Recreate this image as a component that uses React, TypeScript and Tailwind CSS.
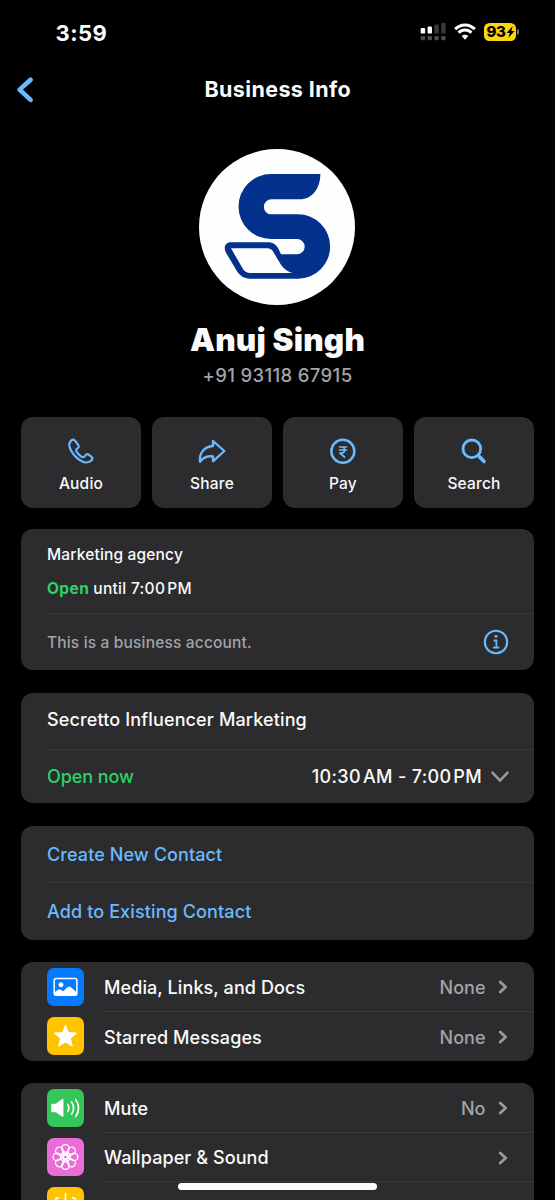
import type { ReactNode } from "react";

const CARD = "ml-[21px] w-[513px] rounded-xl bg-[#2c2c2e]";

function StatusBar() {
  return (
    <div className="flex h-[63px] items-center justify-between pl-[55.5px] pr-[36px]">
      <span className="pt-[2px] text-[22px] font-bold leading-none tracking-[0.5px]">3:59</span>
      <div className="flex items-center">
        <svg className="h-[19px] w-[27px]" viewBox="0 0 27 19">
          <g fill="#fff">
            <rect x="0.7" y="6" width="4.4" height="5.6" rx="1.2" />
            <rect x="7.6" y="4.4" width="4.4" height="7.2" rx="1.2" />
          </g>
          <g fill="#3a3a3a">
            <rect x="14.4" y="2.6" width="4.4" height="9" rx="1.2" />
            <rect x="21.2" y="0.7" width="4.4" height="10.9" rx="1.2" />
          </g>
          <g fill="#4b4b4b">
            <rect x="0.7" y="14" width="4.4" height="4.3" rx="1.2" />
            <rect x="7.6" y="14" width="4.4" height="4.3" rx="1.2" />
            <rect x="14.4" y="14" width="4.4" height="4.3" rx="1.2" />
            <rect x="21.2" y="14" width="4.4" height="4.3" rx="1.2" />
          </g>
        </svg>
        <svg className="ml-[7px] h-[17px] w-[22px]" viewBox="0 0 66 51">
          <g fill="none" stroke="#fff" strokeWidth="9">
            <path d="M3.500 18.500 C20 1.500 46 1.500 62.500 18.500" />
            <path d="M14 29.500 C24 18.500 42 18.500 52 29.500" />
          </g>
          <path d="M23 39 C28 33.500 38 33.500 43 39 L33 50Z" fill="#fff" />
        </svg>
        <div className="ml-[8px] flex h-[18px] w-[32px] items-center rounded-[5.500px] bg-[#fdd50b] pl-[2.500px]">
          <span className="text-[15px] font-extrabold leading-none tracking-[-0.5px] text-black">93</span>
          <svg className="ml-px h-[12px] w-[9px]" viewBox="0 0 9 12">
            <path d="M6.800 0 L0.600 6.900 H3.800 L2.300 12 L8.600 5 H5.300Z" fill="#000" />
          </svg>
        </div>
        <div className="ml-[1px] h-[6px] w-[2px] rounded-r-full bg-[#6b7580]" />
      </div>
    </div>
  );
}

function Avatar() {
  return (
    <svg className="ml-[199px] h-[156px] w-[156px] rounded-full bg-[#fefefe]" viewBox="28 27 468 468">
      <path
        fill="#03318c"
        d="M392 102 H244 A97.500 97.500 0 0 0 244 297 H322 A23 23 0 0 1 322 343 H274 L267 328 C260 314 250 307 235 307 H124 C107 307 100 322 109 338 L142 394 C151 408 164 416 180 416 H325 A96.500 96.500 0 0 0 325 223 H245 A22.500 22.500 0 0 1 245 178 H330 C368 178 392 145 392 102Z"
      />
      <path
        fill="#fefefe"
        d="M124 325 H232 C241 325 247 329 251 336 L269 366 C278 382 290 394 308 399 H182 C172 399 165 395 160 387Z"
      />
    </svg>
  );
}

function Action({ label, children }: { label: string; children: ReactNode }) {
  return (
    <div className="flex h-[91px] w-[120px] flex-col items-center rounded-xl bg-[#2c2c2e] pt-[19px]">
      <svg className="h-[30px] w-[30px]" viewBox="0 0 90 90" fill="none" stroke="#6abaff" strokeLinejoin="round" strokeLinecap="round">
        {children}
      </svg>
      <span className="mt-[8px] text-[15.5px] font-medium leading-[20px] tracking-[0.2px]">{label}</span>
    </div>
  );
}

function Chevron() {
  return (
    <svg className="h-[14px] w-[10px]" viewBox="0 0 10 14" fill="none" stroke="#9a9a9f" strokeWidth="2.700" strokeLinecap="round" strokeLinejoin="round">
      <path d="M2.200 1.900 L7.700 7 L2.200 12.100" />
    </svg>
  );
}

interface RowProps {
  icon: ReactNode;
  tile: string;
  label: string;
  value?: string;
  first?: boolean;
  last?: boolean;
}

function Row({ icon, tile, label, value, first, last }: RowProps) {
  return (
    <div className={`flex pl-[26px] ${first ? "h-[50px]" : "h-[49px]"}`}>
      <div className={`h-[38px] w-[37px] shrink-0 overflow-hidden rounded-[7px] ${first ? "mt-[6px]" : "mt-[5px]"} ${tile}`}>
        <svg className="h-[38px] w-[37px]" viewBox="0 0 37.500 37.500">{icon}</svg>
      </div>
      <div className={`ml-[20px] flex grow items-center pr-[26px] pt-[1px] ${last ? "" : "border-b border-[#3a3a3c]"}`}>
        <span className="grow text-[18px] font-medium tracking-[0.09px]">{label}</span>
        <span className="mr-[12.5px] text-[18px] font-medium text-[#a3a3a8]">{value}</span>
        <Chevron />
      </div>
    </div>
  );
}

const petals = [0, 45, 90, 135, 180, 225, 270, 315];

export default function App() {
  return (
    <div className="relative h-[1200px] w-[555px] overflow-hidden bg-black font-['Inter',sans-serif] text-[#fafafa]">
      <StatusBar />
      <header className="flex h-[53px] items-center">
        <svg className="ml-[15px] h-[28px] w-[20px]" viewBox="0 0 20 28" fill="none" stroke="#6abaff" strokeWidth="4.600" strokeLinecap="round" strokeLinejoin="round">
          <path d="M15.600 3.700 L4.600 13.600 L15.600 23.900" />
        </svg>
        <h1 className="ml-[169.5px] text-[21.5px] font-bold leading-none tracking-[0.38px]">Business Info</h1>
      </header>
      <div className="h-[33px]" />
      <Avatar />
      <h2 className="mt-[17px] text-center text-[31.5px] font-black leading-[36px] tracking-[0.2px]">Anuj Singh</h2>
      <p className="mt-[5px] text-center text-[18.5px] font-medium leading-[25px] tracking-[0.35px] text-[#a3a3a8]">+91 93118 67915</p>

      <div className="ml-[21px] mt-[29px] flex gap-[11px]">
        <Action label="Audio">
          <path
            transform="translate(-168 -92)"
            strokeWidth="6.500"
            d="M184 105 Q190 101 195 106 L205 119 Q208 124 204 128 L199 132 Q197 136 201 141 Q208 151 216 155 Q221 157 224 153 L228 148 Q231 145 236 148 L244 154 Q250 159 245 165 Q237 173 225 171 Q208 167 195 152 Q181 136 178 121 Q177 111 184 105Z"
          />
        </Action>
        <Action label="Share">
          <path transform="translate(-562 -93)" strokeWidth="7" d="M610 108 L644 138 L610 169 V154 C592 152 581 157 571 170 C568 148 580 125 610 123Z" />
        </Action>
        <Action label="Pay">
          <circle cx="44.500" cy="46" r="34.500" strokeWidth="7.500" />
          <path transform="translate(-0.500 -1)" strokeWidth="5" d="M35 34 H56 M35 43 H56 M35 34 H42 C53 34 53 52 42 52 H36 L50 64" />
        </Action>
        <Action label="Search">
          <circle cx="38.500" cy="38.500" r="26.500" strokeWidth="8.500" />
          <path strokeWidth="11" d="M61 62 L75 76" />
        </Action>
      </div>

      <section className={`${CARD} mt-[21px] h-[141px] pl-[26px]`}>
        <div className="h-[84px] pt-[16px] text-[15.5px] font-medium leading-[20px]">
          <p className="tracking-[0.17px]">Marketing agency</p>
          <p className="mt-[14px] flex">
            <span className="mr-[4px] font-bold tracking-[0.42px] text-[#2ad368]">Open</span>
            <span className="tracking-[0.3px]">until 7:00</span>
            <span className="ml-[2px] tracking-[0.3px]">PM</span>
          </p>
        </div>
        <div className="flex h-[57px] items-center justify-between border-t border-[#38383a] pr-[25px]">
          <span className="pt-[2px] text-[15.5px] font-medium tracking-[0.17px] text-[#a3a3a8]">This is a business account.</span>
          <svg className="h-[26px] w-[26px]" viewBox="0 0 26 26" fill="none" stroke="#6abaff">
            <circle cx="13" cy="13" r="11.200" strokeWidth="2.100" />
            <circle cx="13" cy="7.300" r="1.500" fill="#6abaff" stroke="none" />
            <path d="M10.600 11.500 H13.400 V18.600 M10 18.700 H16.300" strokeWidth="1.800" />
          </svg>
        </div>
      </section>

      <section className={`${CARD} mt-[23px] h-[110px] pl-[26px] text-[18px] font-medium`}>
        <div className="flex h-[56px] items-center pb-[3px] tracking-[0.14px]">Secretto Influencer Marketing</div>
        <div className="flex h-[54px] items-center border-t border-[#38383a] pr-[25px]">
          <span className="grow tracking-[-0.06px] text-[#2ad368]">Open now</span>
          <span className="flex tracking-[0.33px]">
            <span>10:30</span>
            <span className="ml-[2px]">AM - 7:00</span>
            <span className="ml-[2px]">PM</span>
          </span>
          <svg className="ml-[9px] h-[12px] w-[18px]" viewBox="0 0 18 12" fill="none" stroke="#98989d" strokeWidth="2.600" strokeLinecap="round" strokeLinejoin="round">
            <path d="M1.500 1.700 L9 9.700 L16.500 1.700" />
          </svg>
        </div>
      </section>

      <section className={`${CARD} mt-[23px] h-[114px] pl-[26px] text-[18px] font-medium text-[#6abaff]`}>
        <div className="flex h-[56px] items-center pt-[1px] tracking-[0.09px]">Create New Contact</div>
        <div className="flex h-[58px] items-center border-t border-[#38383a] tracking-[0.12px]">Add to Existing Contact</div>
      </section>

      <section className={`${CARD} mt-[22px] h-[99px]`}>
        <Row
          first
          label="Media, Links, and Docs"
          value="None"
          tile="bg-[#067afe]"
          icon={
            <g>
              <rect x="7.300" y="10.200" width="23" height="17" rx="2" fill="none" stroke="#fff" strokeWidth="1.500" />
              <circle cx="14.200" cy="16.500" r="2.500" fill="#fff" />
              <path d="M7.300 24.200 L11.500 21.300 Q12.700 20.600 14 21.500 L16.500 23 L21 18.800 Q22.500 17.500 24 18.800 L30.300 24.200 V27 H7.300Z" fill="#fff" />
            </g>
          }
        />
        <Row
          last
          label="Starred Messages"
          value="None"
          tile="bg-[#ffc300]"
          icon={
            <path
              d="M18.700 8 L21.600 15.400 L29.600 15.900 L23.400 21 L25.500 28.900 L18.700 24.600 L11.900 28.900 L14 21 L7.800 15.900 L15.800 15.400Z"
              fill="#fff"
              stroke="#fff"
              strokeWidth="1.200"
              strokeLinejoin="round"
            />
          }
        />
      </section>

      <section className={`${CARD} mt-[22px] h-[160px]`}>
        <Row
          first
          label="Mute"
          value="No"
          tile="bg-[#34c659]"
          icon={
            <g>
              <path d="M5.500 14.500 H9 L15 10 Q16.700 9.200 16.700 11 V26.500 Q16.700 28.200 15 27.300 L9 23 H5.500 Q4.300 23 4.300 21.800 V15.700 Q4.300 14.500 5.500 14.500Z" fill="#fff" />
              <g fill="none" stroke="#fff" strokeWidth="1.700" strokeLinecap="round">
                <path d="M21 15.200 Q23.300 18.700 21 22.300" />
                <path d="M25 12.600 Q29 18.700 25 25" />
                <path d="M29 10 Q35 18.700 29 27.500" />
              </g>
            </g>
          }
        />
        <Row
          label="Wallpaper & Sound"
          tile="bg-[#ea6cd8]"
          icon={
            <g fill="none" stroke="#fff" strokeWidth="1.300">
              {petals.map((angle) => (
                <g key={angle} transform={`rotate(${angle} 18.700 18.700)`}>
                  <circle cx="18.700" cy="10" r="3.800" />
                  <path d="M16.200 12.800 L18.700 16.500 L21.200 12.800" />
                </g>
              ))}
              <circle cx="18.700" cy="18.700" r="2.200" />
            </g>
          }
        />
        <Row
          last
          label="Save to Camera Roll"
          value="Default"
          tile="bg-[#ffc300]"
          icon={
            <g fill="none" stroke="#fff" strokeWidth="1.600" strokeLinecap="round" strokeLinejoin="round">
              <path d="M18.700 6 V21 M14 17 L18.700 21.500 L23.400 17" />
              <path d="M11.500 10.500 H10.500 Q9 10.500 9 12 V27 Q9 29 11 29 H26.400 Q28.400 29 28.400 27 V12 Q28.400 10.500 26.900 10.500 H25.900" />
            </g>
          }
        />
      </section>

      <div className="absolute left-[178px] top-[1183px] h-[7px] w-[199px] rounded-full bg-white" />
    </div>
  );
}
